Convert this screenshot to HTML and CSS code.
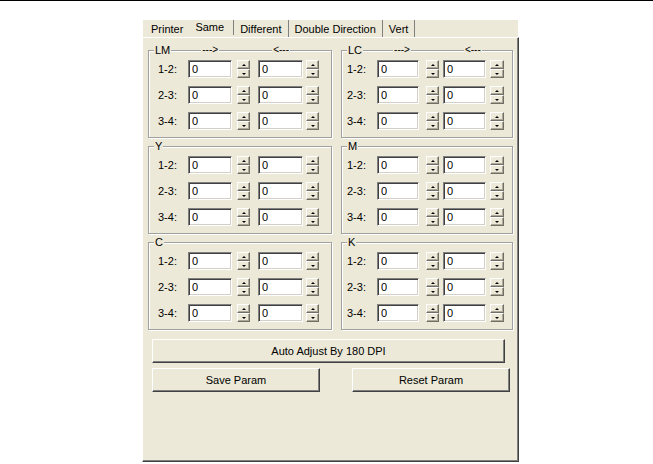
FILE: index.html
```html
<!DOCTYPE html>
<html lang="en">
  <head>
    <meta charset="UTF-8" />
    <title>Bidirection Adjust</title>
    <link rel="stylesheet" href="styles.css">
  </head>
  <body>
    <div class="topline"></div>

    <div class="dialog">
      <!-- tab strip -->
      <div class="tabs">
        <span class="tab first">Printer</span>
        <span class="tab active">Same</span>
        <span class="tab">Different</span>
        <span class="tab">Double Direction</span>
        <span class="tab">Vert</span>
      </div>

      <div class="page">
        <div class="groups">
          <!-- LM -->
          <div class="group">
            <div class="group-head">
              <span class="title">LM</span>
              <span class="dir fwd">---&gt;</span>
              <span class="dir back">&lt;---</span>
            </div>
            <div class="row"><span class="lbl">1-2:</span><span class="field">0</span><span class="spin"><b class="up"></b><b class="down"></b></span><span class="field second">0</span><span class="spin last"><b class="up"></b><b class="down"></b></span></div>
            <div class="row"><span class="lbl">2-3:</span><span class="field">0</span><span class="spin"><b class="up"></b><b class="down"></b></span><span class="field second">0</span><span class="spin last"><b class="up"></b><b class="down"></b></span></div>
            <div class="row"><span class="lbl">3-4:</span><span class="field">0</span><span class="spin"><b class="up"></b><b class="down"></b></span><span class="field second">0</span><span class="spin last"><b class="up"></b><b class="down"></b></span></div>
          </div>

          <!-- LC -->
          <div class="group right">
            <div class="group-head">
              <span class="title">LC</span>
              <span class="dir fwd">---&gt;</span>
              <span class="dir back">&lt;---</span>
            </div>
            <div class="row"><span class="lbl">1-2:</span><span class="field">0</span><span class="spin"><b class="up"></b><b class="down"></b></span><span class="field second">0</span><span class="spin last"><b class="up"></b><b class="down"></b></span></div>
            <div class="row"><span class="lbl">2-3:</span><span class="field">0</span><span class="spin"><b class="up"></b><b class="down"></b></span><span class="field second">0</span><span class="spin last"><b class="up"></b><b class="down"></b></span></div>
            <div class="row"><span class="lbl">3-4:</span><span class="field">0</span><span class="spin"><b class="up"></b><b class="down"></b></span><span class="field second">0</span><span class="spin last"><b class="up"></b><b class="down"></b></span></div>
          </div>

          <!-- Y -->
          <div class="group">
            <div class="group-head"><span class="title">Y</span></div>
            <div class="row"><span class="lbl">1-2:</span><span class="field">0</span><span class="spin"><b class="up"></b><b class="down"></b></span><span class="field second">0</span><span class="spin last"><b class="up"></b><b class="down"></b></span></div>
            <div class="row"><span class="lbl">2-3:</span><span class="field">0</span><span class="spin"><b class="up"></b><b class="down"></b></span><span class="field second">0</span><span class="spin last"><b class="up"></b><b class="down"></b></span></div>
            <div class="row"><span class="lbl">3-4:</span><span class="field">0</span><span class="spin"><b class="up"></b><b class="down"></b></span><span class="field second">0</span><span class="spin last"><b class="up"></b><b class="down"></b></span></div>
          </div>

          <!-- M -->
          <div class="group right">
            <div class="group-head"><span class="title">M</span></div>
            <div class="row"><span class="lbl">1-2:</span><span class="field">0</span><span class="spin"><b class="up"></b><b class="down"></b></span><span class="field second">0</span><span class="spin last"><b class="up"></b><b class="down"></b></span></div>
            <div class="row"><span class="lbl">2-3:</span><span class="field">0</span><span class="spin"><b class="up"></b><b class="down"></b></span><span class="field second">0</span><span class="spin last"><b class="up"></b><b class="down"></b></span></div>
            <div class="row"><span class="lbl">3-4:</span><span class="field">0</span><span class="spin"><b class="up"></b><b class="down"></b></span><span class="field second">0</span><span class="spin last"><b class="up"></b><b class="down"></b></span></div>
          </div>

          <!-- C -->
          <div class="group">
            <div class="group-head"><span class="title">C</span></div>
            <div class="row"><span class="lbl">1-2:</span><span class="field">0</span><span class="spin"><b class="up"></b><b class="down"></b></span><span class="field second">0</span><span class="spin last"><b class="up"></b><b class="down"></b></span></div>
            <div class="row"><span class="lbl">2-3:</span><span class="field">0</span><span class="spin"><b class="up"></b><b class="down"></b></span><span class="field second">0</span><span class="spin last"><b class="up"></b><b class="down"></b></span></div>
            <div class="row"><span class="lbl">3-4:</span><span class="field">0</span><span class="spin"><b class="up"></b><b class="down"></b></span><span class="field second">0</span><span class="spin last"><b class="up"></b><b class="down"></b></span></div>
          </div>

          <!-- K -->
          <div class="group right">
            <div class="group-head"><span class="title">K</span></div>
            <div class="row"><span class="lbl">1-2:</span><span class="field">0</span><span class="spin"><b class="up"></b><b class="down"></b></span><span class="field second">0</span><span class="spin last"><b class="up"></b><b class="down"></b></span></div>
            <div class="row"><span class="lbl">2-3:</span><span class="field">0</span><span class="spin"><b class="up"></b><b class="down"></b></span><span class="field second">0</span><span class="spin last"><b class="up"></b><b class="down"></b></span></div>
            <div class="row"><span class="lbl">3-4:</span><span class="field">0</span><span class="spin"><b class="up"></b><b class="down"></b></span><span class="field second">0</span><span class="spin last"><b class="up"></b><b class="down"></b></span></div>
          </div>
        </div>

        <!-- buttons -->
        <div class="actions">
          <button class="btn auto">Auto Adjust By 180 DPI</button>
          <div class="btn-row">
            <button class="btn save">Save Param</button>
            <button class="btn reset">Reset Param</button>
          </div>
        </div>
      </div>
    </div>
  </body>
</html>
```

FILE: styles.css
```css
body {
  margin: 0;
  background-color: #fff;
  font-family: "Liberation Sans", Arial, sans-serif;
  font-size: 11px;
  color: #000;
}

.topline {
  height: 1px;
  background-color: #000;
}

.dialog {
  margin: 19px 0 0 142px;
  width: 377px;
}

/* tab strip */
.tabs {
  display: flex;
  height: 17px;
  margin-left: 1px;
  margin-right: 1px;
  background-color: #ece9d8;
}

.tab {
  padding: 3px 6px 0 6px;
  line-height: 13px;
  border-right: 1px solid #808080;
  height: 14px;
}

.tab.first {
  padding-left: 8px;
  border-right: none;
}

.tab.active {
  padding-top: 1px;
  padding-right: 9px;
}

/* tab page */
.page {
  box-sizing: border-box;
  height: 425px;
  padding: 12px 5px 0 5px;
  background-color: #ece9d8;
  border: 1px solid;
  border-color: #fff #404040 #404040 #fff;
  box-shadow: inset -1px -1px 0 #808080;
}

.groups {
  display: grid;
  grid-template-columns: 184px 172px;
  column-gap: 9px;
  row-gap: 8px;
}

.group {
  border: 1px solid #a0a0a0;
  box-shadow: 1px 1px 0 #fff, inset 1px 1px 0 #fff;
  padding: 0 0 7px 9px;
}

.group.right {
  padding-left: 5px;
}

.group-head {
  display: flex;
  height: 12px;
  line-height: 12px;
  margin-top: -7px;
}

.group-head span {
  background-color: #ece9d8;
  padding: 0 1px;
}

.title {
  margin-left: -4px;
}

.group.right .title {
  margin-left: 0;
}

.dir {
  font-size: 10px;
}

.dir.fwd {
  margin-left: 30px;
}

.dir.back {
  margin-left: 53px;
}

.row {
  display: flex;
  align-items: center;
  height: 18px;
  margin-top: 8px;
}

.group-head + .row {
  margin-top: 4px;
}

.lbl {
  width: 30px;
}

.field {
  box-sizing: border-box;
  width: 44px;
  height: 18px;
  padding: 2px 0 0 3px;
  background-color: #fff;
  border: 1px solid;
  border-color: #808080 #fff #fff #808080;
  box-shadow: inset 1px 1px 0 #404040, inset -1px -1px 0 #d4d0c8;
  line-height: 13px;
}

.field.second {
  width: 45px;
  margin-left: 8px;
}

.spin {
  display: flex;
  flex-direction: column;
  width: 13px;
  height: 18px;
  margin-left: 5px;
}

.spin.last {
  margin-left: 3px;
}

.group.right .field {
  width: 42px;
}

.group.right .spin {
  margin-left: 7px;
}

.group.right .field.second {
  width: 43px;
  margin-left: 4px;
}

.group.right .spin.last {
  width: 14px;
  margin-left: 4px;
}

.spin b {
  flex: 1;
  display: flex;
  align-items: center;
  justify-content: center;
  box-sizing: border-box;
  background-color: #ece9d8;
  border: 1px solid;
  border-color: #fff #716f64 #716f64 #fff;
  box-shadow: inset -1px -1px 0 #aca899;
}

.spin b::after {
  content: "";
  width: 0;
  height: 0;
  border-left: 2px solid transparent;
  border-right: 2px solid transparent;
}

.spin .up::after {
  border-bottom: 2px solid #000;
}

.spin .down::after {
  border-top: 2px solid #000;
}

/* buttons */
.actions {
  padding-left: 4px;
}

.btn {
  display: block;
  box-sizing: border-box;
  height: 24px;
  padding: 0;
  font-family: "Liberation Sans", Arial, sans-serif;
  font-size: 11px;
  color: #000;
  background-color: #ece9d8;
  border: 1px solid;
  border-color: #fff #404040 #404040 #fff;
  box-shadow: inset -1px -1px 0 #808080;
}

.btn.auto {
  width: 353px;
  margin-top: 9px;
}

.btn-row {
  display: flex;
  margin-top: 5px;
}

.btn.save {
  width: 168px;
}

.btn.reset {
  width: 158px;
  margin-left: 32px;
}
```
